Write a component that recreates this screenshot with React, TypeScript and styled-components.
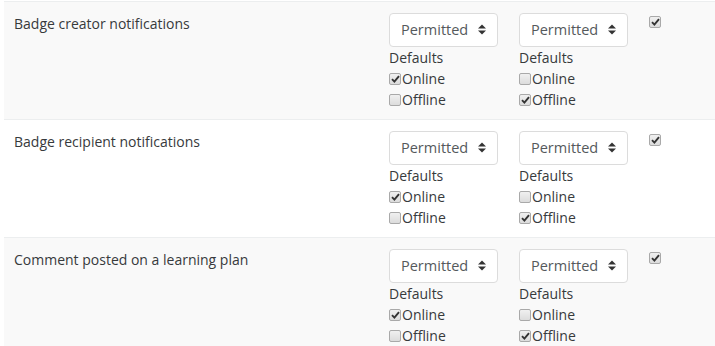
import styled, { createGlobalStyle } from "styled-components";

const GlobalStyle = createGlobalStyle`
  body {
    margin: 0;
    background: #fff;
    font-family: "Open Sans", "Liberation Sans", sans-serif;
    color: #373a3c;
  }
`;

interface Preference {
  name: string;
}

const preferences: Preference[] = [
  { name: "Badge creator notifications" },
  { name: "Badge recipient notifications" },
  { name: "Comment posted on a learning plan" },
];

const Page = styled.div`
  padding: 1px 0 0 4px;
`;

const Table = styled.div`
  display: flex;
  flex-direction: column;
  border-top: 1px solid #eceeef;
`;

const Row = styled.div<{ $striped: boolean }>`
  display: grid;
  grid-template-columns: 385px 130px 130px 1fr;
  height: 118px;
  box-sizing: border-box;
  padding-top: 11px;
  background: ${(p) => (p.$striped ? "#f9f9f9" : "#fff")};
  border-bottom: 1px solid #eceeef;
`;

const Name = styled.div`
  padding-left: 10px;
  font-size: 14px;
  line-height: 21px;
`;

const Cell = styled.div`
  display: flex;
  flex-direction: column;
  align-items: flex-start;
`;

const Select = styled.div`
  width: 109px;
  height: 34px;
  box-sizing: border-box;
  border: 1px solid #dcdcdc;
  border-radius: 4px;
  background: #fff;
  display: flex;
  align-items: center;
  justify-content: space-between;
  padding: 0 11px 1px 11px;
  font-size: 14.5px;
  color: #55595c;
`;

const Label = styled.div`
  font-size: 14px;
  line-height: 21px;
`;

const Option = styled.label`
  display: flex;
  align-items: center;
  font-size: 14px;
  line-height: 21px;
`;

const Box = styled.span`
  width: 12px;
  height: 12px;
  box-sizing: border-box;
  border: 1px solid #a9a9a9;
  border-radius: 2px;
  background: linear-gradient(#f0f0f0, #dcdcdc);
  display: inline-flex;
  align-items: center;
  justify-content: center;
  margin-right: 1px;
`;

const Lock = styled.div`
  display: flex;
  align-items: flex-start;
  padding-top: 3px;
`;

const Check = ({ on }: { on: boolean }) => (
  <Box>
    {on && (
      <svg width="9" height="8" viewBox="0 0 9 8">
        <path d="M1 4.2 L3.4 6.6 L8 1.2" fill="none" stroke="#333" strokeWidth="1.9" />
      </svg>
    )}
  </Box>
);

const Arrows = () => (
  <svg width="8" height="11" viewBox="0 0 8 11">
    <path d="M0 4.5 L4 0.5 L8 4.5 Z M0 6.5 L4 10.5 L8 6.5 Z" fill="#333" />
  </svg>
);

const Output = ({ online }: { online: boolean }) => (
  <Cell>
    <Select>
      Permitted
      <Arrows />
    </Select>
    <Label>Defaults</Label>
    <Option>
      <Check on={online} />
      Online
    </Option>
    <Option>
      <Check on={!online} />
      Offline
    </Option>
  </Cell>
);

const App = () => (
  <Page>
    <GlobalStyle />
    <Table>
      {preferences.map((pref, i) => (
        <Row key={pref.name} $striped={i % 2 === 0}>
          <Name>{pref.name}</Name>
          <Output online />
          <Output online={false} />
          <Lock>
            <Check on />
          </Lock>
        </Row>
      ))}
    </Table>
  </Page>
);

export default App;
